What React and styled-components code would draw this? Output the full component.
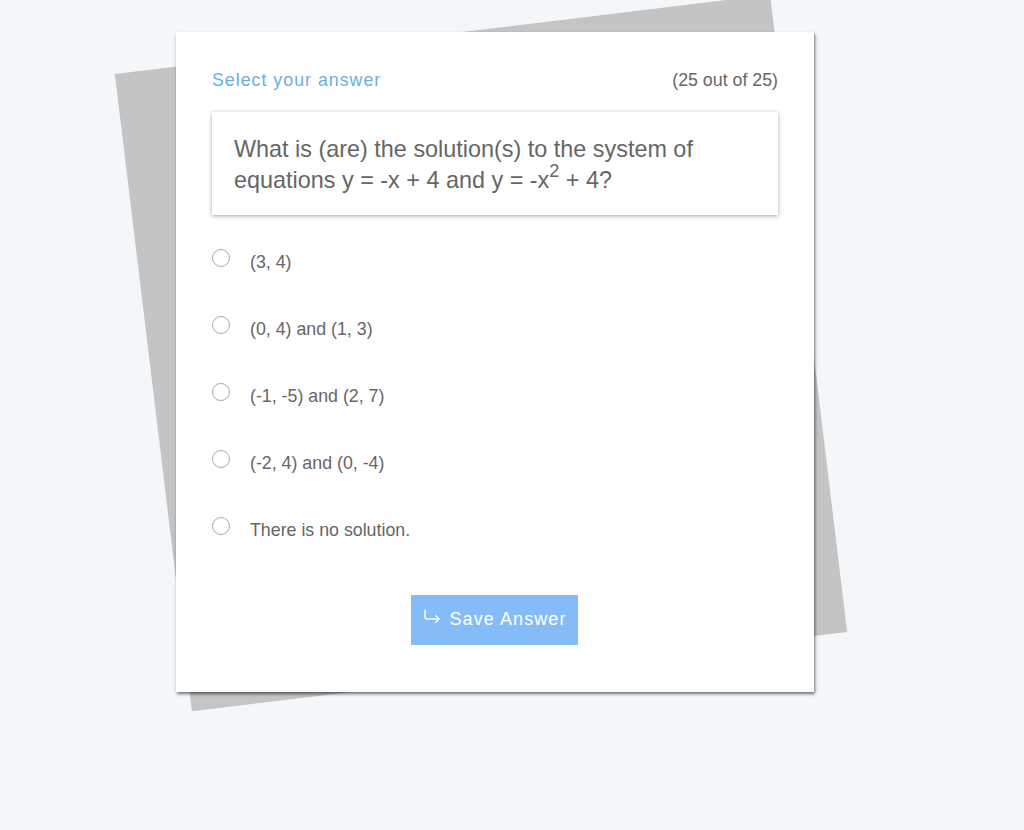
import React from "react";
import styled, { createGlobalStyle } from "styled-components";

const Global = createGlobalStyle`
  html, body { margin: 0; padding: 0; background: #f4f7fa; }
  body { font-family: "Liberation Sans", Arial, sans-serif; }
`;

const Page = styled.div`
  width: 1024px;
  height: 830px;
  overflow: hidden;
  padding-top: 32px;
  box-sizing: border-box;
`;

const Stack = styled.div`
  position: relative;
  margin-left: 176px;
  width: 638px;
`;

const Paper = styled.div`
  position: absolute;
  left: -25px;
  top: 0px;
  width: 660px;
  height: 642px;
  background: #c4c4c4;
  transform: rotate(-6.9deg);
  z-index: 0;
`;

const Card = styled.div`
  position: relative;
  z-index: 1;
  background: #ffffff;
  height: 660px;
  box-sizing: border-box;
  padding: 38px 36px 47px;
  box-shadow: 1px 2px 3px rgba(0, 0, 0, 0.55);
  display: flex;
  flex-direction: column;
`;

const Header = styled.div`
  display: flex;
  justify-content: space-between;
  align-items: baseline;
  font-size: 17.8px;
  line-height: 20px;
`;

const Title = styled.span`
  color: #6aafdf;
  letter-spacing: 1px;
`;

const Counter = styled.span`
  color: #666666;
`;

const Question = styled.div`
  margin-top: 22px;
  padding: 22px 22px 19px;
  font-size: 23.4px;
  line-height: 31px;
  color: #666666;
  box-shadow: 0 1px 4px rgba(0, 0, 0, 0.35);
  sup {
    font-size: 18px;
    line-height: 0;
    vertical-align: 11px;
  }
`;

const Options = styled.div`
  margin-top: 37px;
  display: flex;
  flex-direction: column;
  gap: 47px;
`;

const Option = styled.label`
  display: flex;
  align-items: flex-start;
  gap: 20px;
  font-size: 17.8px;
  line-height: 20px;
  color: #666666;
  cursor: pointer;
`;

const Radio = styled.span`
  flex: none;
  width: 16px;
  height: 16px;
  margin-top: -3px;
  border: 1px solid #aaaaaa;
  border-radius: 50%;
  background: #fff;
`;

const ButtonRow = styled.div`
  margin-top: auto;
  display: flex;
  justify-content: center;
`;

const SaveButton = styled.button`
  width: 167px;
  height: 50px;
  border: none;
  background: #85bcf7;
  color: #ffffff;
  font-family: "Liberation Sans", Arial, sans-serif;
  font-size: 18px;
  letter-spacing: 1.1px;
  display: flex;
  align-items: center;
  justify-content: center;
  gap: 8px;
  padding: 0 0 1px 1px;
  margin-left: -1px;
  cursor: pointer;
`;

const ArrowIcon = () => (
  <svg width="18" height="16" viewBox="0 0 18 16" fill="none" stroke="#fff" strokeWidth="1.4" strokeLinecap="round" strokeLinejoin="round" style={{ marginTop: -6 }}>
    <path d="M2 1 V7.5 Q2 10 4.5 10 H16" />
    <path d="M12.8 6.8 L16 10 L12.8 13.2" />
  </svg>
);

const answers = [
  "(3, 4)",
  "(0, 4) and (1, 3)",
  "(-1, -5) and (2, 7)",
  "(-2, 4) and (0, -4)",
  "There is no solution.",
];

export default function App() {
  return (
    <Page>
      <Global />
      <Stack>
        <Paper />
        <Card>
          <Header>
            <Title>Select your answer</Title>
            <Counter>(25 out of 25)</Counter>
          </Header>
          <Question>
            What is (are) the solution(s) to the system of equations y = -x + 4 and y = -x<sup>2</sup> + 4?
          </Question>
          <Options>
            {answers.map((a) => (
              <Option key={a}>
                <Radio />
                <span>{a}</span>
              </Option>
            ))}
          </Options>
          <ButtonRow>
            <SaveButton>
              <ArrowIcon />
              Save Answer
            </SaveButton>
          </ButtonRow>
        </Card>
      </Stack>
    </Page>
  );
}
